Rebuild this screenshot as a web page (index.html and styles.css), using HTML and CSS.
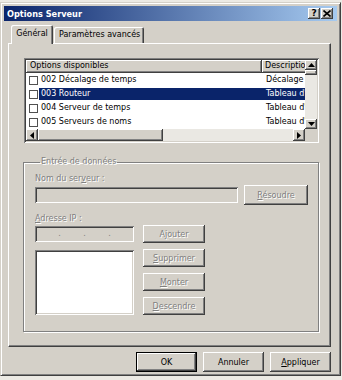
FILE: index.html
```html
<!DOCTYPE html>
<html lang="fr">
<head>
  <meta charset="UTF-8">
  <title>Options Serveur</title>
  <link rel="stylesheet" href="styles.css">
</head>
<body>
  <div class="window">
    <div class="titlebar">
      <span class="title">Options Serveur</span>
      <div class="caption-btns">
        <span class="cap-btn">?</span>
        <span class="cap-btn">
          <svg width="8" height="7" viewBox="0 0 8 7"><path d="M0.5 0.5 L7.5 6.5 M7.5 0.5 L0.5 6.5" stroke="#000" stroke-width="1.6"/></svg>
        </span>
      </div>
    </div>

    <div class="client">
      <div class="tabs">
        <div class="tab active">Général</div>
        <div class="tab">Paramètres avancés</div>
      </div>

      <div class="panel">
        <!-- Options list -->
        <div class="listview">
          <div class="lv-top">
            <div class="lv-body">
              <div class="lv-header">
                <div class="lv-col col-name">Options disponibles</div>
                <div class="lv-col col-desc">Description</div>
              </div>
              <div class="lv-row">
                <span class="check"></span>
                <span class="lv-cell cell-name">002 Décalage de temps</span>
                <span class="lv-cell cell-desc">Décalage UCT en secondes</span>
              </div>
              <div class="lv-row selected">
                <span class="check"></span>
                <span class="lv-cell cell-name">003 Routeur</span>
                <span class="lv-cell cell-desc">Tableau d'adresses IP</span>
              </div>
              <div class="lv-row">
                <span class="check"></span>
                <span class="lv-cell cell-name">004 Serveur de temps</span>
                <span class="lv-cell cell-desc">Tableau d'adresses IP</span>
              </div>
              <div class="lv-row">
                <span class="check"></span>
                <span class="lv-cell cell-name">005 Serveurs de noms</span>
                <span class="lv-cell cell-desc">Tableau d'adresses IP</span>
              </div>
            </div>
            <div class="vscroll">
              <span class="sb-btn">
                <svg width="7" height="4" viewBox="0 0 7 4"><polygon points="3.5,0 7,4 0,4" fill="#000"/></svg>
              </span>
              <span class="sb-thumb v"></span>
              <span class="sb-track"></span>
              <span class="sb-btn">
                <svg width="7" height="4" viewBox="0 0 7 4"><polygon points="0,0 7,0 3.5,4" fill="#000"/></svg>
              </span>
            </div>
          </div>
          <div class="lv-bottom">
            <div class="hscroll">
              <span class="sb-btn">
                <svg width="4" height="7" viewBox="0 0 4 7"><polygon points="0,3.5 4,0 4,7" fill="#000"/></svg>
              </span>
              <span class="sb-thumb h"></span>
              <span class="sb-track"></span>
              <span class="sb-btn">
                <svg width="4" height="7" viewBox="0 0 4 7"><polygon points="0,0 4,3.5 0,7" fill="#000"/></svg>
              </span>
            </div>
            <div class="sb-corner"></div>
          </div>
        </div>

        <!-- Data entry -->
        <fieldset class="group">
          <legend class="disabled">Entrée de données</legend>
          <div class="label disabled">Nom du ser<u>v</u>eur :</div>
          <div class="field-row">
            <div class="field name-field"></div>
            <button class="btn side-btn disabled"><u>R</u>ésoudre</button>
          </div>
          <div class="label ip-label disabled"><u>A</u>dresse IP :</div>
          <div class="ip-area">
            <div class="ip-left">
              <div class="field ip-field">
                <span>.</span><span>.</span><span>.</span>
              </div>
              <div class="ip-list"></div>
            </div>
            <div class="ip-btns">
              <button class="btn side-btn disabled">A<u>j</u>outer</button>
              <button class="btn side-btn disabled"><u>S</u>upprimer</button>
              <button class="btn side-btn disabled"><u>M</u>onter</button>
              <button class="btn side-btn disabled"><u>D</u>escendre</button>
            </div>
          </div>
        </fieldset>
      </div>

      <div class="dialog-btns">
        <button class="btn dlg-btn default">OK</button>
        <button class="btn dlg-btn">Annuler</button>
        <button class="btn dlg-btn"><u>A</u>ppliquer</button>
      </div>
    </div>
  </div>
</body>
</html>
```

FILE: styles.css
```css
/* Base */
body {
  margin: 0;
  background-color: #ECEAE4;
  font-family: 'DejaVu Sans', 'Liberation Sans', sans-serif;
  font-size: 8px;
  color: #000;
}

u {
  text-decoration-thickness: 1px;
  text-underline-offset: 1px;
}

.disabled {
  color: #808080;
  text-shadow: 1px 1px 0 #fff;
}

/* Window frame */
.window {
  box-sizing: border-box;
  width: 341px;
  height: 374px;
  margin-top: 2px;
  padding: 3px;
  background-color: #D4D0C8;
  border: 1px solid;
  border-color: #D4D0C8 #404040 #404040 #D4D0C8;
  box-shadow: inset 1px 1px #fff, inset -1px -1px #808080;
}

.titlebar {
  display: flex;
  align-items: center;
  justify-content: space-between;
  height: 15px;
  padding: 0 4px 0 3px;
  background: linear-gradient(to right, #0A246A, #A6CAF0);
}

.title {
  color: #fff;
  font-weight: bold;
  font-size: 8.2px;
}

.caption-btns {
  display: flex;
  gap: 1px;
}

.cap-btn {
  display: flex;
  align-items: center;
  justify-content: center;
  width: 12px;
  height: 11px;
  background-color: #D4D0C8;
  box-shadow: inset -1px -1px #404040, inset 1px 1px #fff, inset -2px -2px #808080;
  font-weight: bold;
  font-size: 9px;
  line-height: 1;
}

/* Client area */
.client {
  padding: 4px 6px 0 4px;
}

.tabs {
  display: flex;
  align-items: flex-end;
  height: 18px;
  padding-left: 3px;
}

.tab {
  box-sizing: border-box;
  height: 16px;
  padding: 3px 4px 0;
  border-radius: 2px 2px 0 0;
  box-shadow: inset 1px 1px #fff, inset -1px 0 #404040, inset -2px 0 #808080;
  white-space: nowrap;
}

.tab.active {
  position: relative;
  z-index: 1;
  width: 42px;
  height: 19px;
  margin-bottom: -1px;
  padding: 4px 0 0;
  text-align: center;
  background-color: #D4D0C8;
}

.tab:not(.active) {
  width: 90px;
  padding-left: 5px;
  margin-left: 1px;
}

.panel {
  height: 288px;
  padding: 14px 11px 0 15px;
  border: 1px solid;
  border-color: #fff #404040 #404040 #fff;
  box-shadow: inset -1px -1px #808080;
}

/* List view */
.listview {
  box-sizing: border-box;
  width: 295px;
  height: 85px;
  padding: 2px;
  background-color: #fff;
  box-shadow: inset 1px 1px #808080, inset -1px -1px #fff, inset 2px 2px #404040, inset -2px -2px #D4D0C8;
}

.lv-top {
  display: flex;
  height: 69px;
}

.lv-body {
  flex: 1;
  min-width: 0;
  overflow: hidden;
}

.lv-header {
  display: flex;
  height: 13px;
}

.lv-col {
  box-sizing: border-box;
  flex-shrink: 0;
  height: 13px;
  line-height: 12px;
  background-color: #D4D0C8;
  box-shadow: inset -1px -1px #404040, inset 1px 1px #fff, inset -2px -2px #808080;
  white-space: nowrap;
  overflow: hidden;
}

.col-name {
  width: 236px;
  padding-left: 4px;
}

.col-desc {
  width: 60px;
  padding-left: 3px;
}

.lv-row {
  display: flex;
  align-items: center;
  height: 14px;
  white-space: nowrap;
}

.check {
  box-sizing: border-box;
  flex-shrink: 0;
  width: 9px;
  height: 9px;
  margin: 0 1px 0 3px;
  border: 1px solid #505050;
  background-color: #fff;
}

.lv-cell {
  box-sizing: border-box;
  flex-shrink: 0;
  line-height: 12px;
  overflow: hidden;
}

.cell-name {
  width: 223px;
  padding-left: 2px;
}

.cell-desc {
  width: 100px;
  padding-left: 4px;
}

.lv-row.selected .lv-cell {
  background-color: #0A246A;
  color: #fff;
}

/* Scroll bars */
.vscroll {
  display: flex;
  flex-direction: column;
  flex-shrink: 0;
  width: 12px;
}

.lv-bottom {
  display: flex;
  height: 12px;
}

.hscroll {
  display: flex;
  flex: 1;
}

.sb-btn {
  display: flex;
  align-items: center;
  justify-content: center;
  flex-shrink: 0;
  width: 12px;
  height: 12px;
  background-color: #D4D0C8;
  box-shadow: inset -1px -1px #404040, inset 1px 1px #fff, inset -2px -2px #808080;
}

.vscroll .sb-btn {
  height: 10px;
}

.sb-track {
  flex: 1;
  background-color: #EAE8E3;
}

.sb-thumb {
  flex-shrink: 0;
  background-color: #D4D0C8;
  box-shadow: inset -1px -1px #404040, inset 1px 1px #fff, inset -2px -2px #808080;
}

.sb-thumb.v { height: 5px; }
.sb-thumb.h { width: 125px; }

.sb-corner {
  width: 12px;
  background-color: #D4D0C8;
}

/* Group box */
.group {
  box-sizing: border-box;
  width: 296px;
  height: 175px;
  margin: 14px 0 0 -1px;
  padding: 7px 0 0 11px;
  border: 1px solid #808080;
  box-shadow: inset 1px 1px #fff, 1px 1px #fff;
}

.group legend {
  padding: 0 1px;
  margin-left: 5px;
  line-height: 10px;
}

.label {
  height: 10px;
  line-height: 10px;
}

.ip-label {
  margin-top: 9px;
}

.field {
  box-sizing: border-box;
  height: 16px;
  background-color: #D4D0C8;
  box-shadow: inset 1px 1px #808080, inset -1px -1px #fff, inset 2px 2px #404040, inset -2px -2px #D4D0C8;
}

.field-row {
  display: flex;
  align-items: center;
  gap: 6px;
  height: 20px;
  margin-top: 1px;
}

.name-field { width: 203px; }

.ip-area {
  display: flex;
  gap: 9px;
  margin-top: 1px;
}

.ip-left {
  display: flex;
  flex-direction: column;
  width: 99px;
  padding-top: 1px;
}

.ip-field {
  display: flex;
  justify-content: space-around;
  padding: 0 12px;
  line-height: 15px;
  color: #808080;
}

.ip-list {
  height: 65px;
  margin-top: 8px;
  background-color: #fff;
  box-shadow: inset 1px 1px #808080, inset -1px -1px #fff, inset 2px 2px #404040, inset -2px -2px #D4D0C8;
}

.ip-btns {
  display: flex;
  flex-direction: column;
  gap: 6px;
}

/* Buttons */
.btn {
  box-sizing: border-box;
  padding: 0;
  border: none;
  background-color: #D4D0C8;
  font-family: inherit;
  font-size: 8px;
  box-shadow: inset -1px -1px #404040, inset 1px 1px #fff, inset -2px -2px #808080;
}

.btn.disabled {
  color: #808080;
}

.side-btn {
  width: 62px;
  height: 18px;
}

.field-row .side-btn {
  width: 64px;
  height: 20px;
}

.dialog-btns {
  display: flex;
  justify-content: flex-end;
  gap: 6px;
  margin-top: 5px;
}

.dlg-btn {
  width: 61px;
  height: 20px;
  color: #000;
}

.dlg-btn.default {
  border: 1px solid #000;
}
```
